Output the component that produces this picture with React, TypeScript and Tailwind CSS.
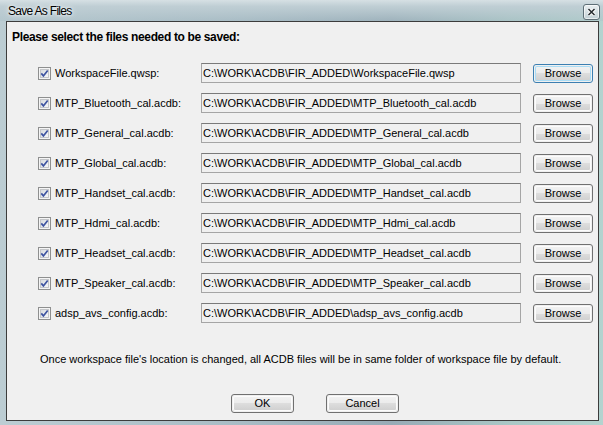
import React from "react";

const files = [
  "WorkspaceFile.qwsp",
  "MTP_Bluetooth_cal.acdb",
  "MTP_General_cal.acdb",
  "MTP_Global_cal.acdb",
  "MTP_Handset_cal.acdb",
  "MTP_Hdmi_cal.acdb",
  "MTP_Headset_cal.acdb",
  "MTP_Speaker_cal.acdb",
  "adsp_avs_config.acdb",
];

const basePath = "C:\\WORK\\ACDB\\FIR_ADDED\\";

/** Win7 style checked checkbox, 13x13 */
function CheckBox() {
  return (
    <svg width="13" height="13" viewBox="0 0 13 13" className="shrink-0">
      <defs>
        <linearGradient id="cbFill" x1="0" y1="0" x2="1" y2="1">
          <stop offset="0" stopColor="#d6d9dd" />
          <stop offset="1" stopColor="#f8f9fa" />
        </linearGradient>
      </defs>
      <rect x="0.5" y="0.5" width="12" height="12" fill="#f4f4f4" stroke="#8e8f8f" />
      <rect x="2.5" y="2.5" width="8" height="8" fill="url(#cbFill)" stroke="#c4c6c9" />
      <path d="M3.3 6.4 L5.4 8.9 L9.7 3.4" fill="none" stroke="#3d53a0" strokeWidth="1.7" />
    </svg>
  );
}

function WinButton({
  label,
  width,
  focused,
}: {
  label: string;
  width: string;
  focused?: boolean;
}) {
  return (
    <div
      className={`${width} h-[19px] shrink-0 rounded-[3px] border ${
        focused ? "border-[#3c7fb1]" : "border-[#707070]"
      } p-px`}
    >
      <div
        className={`flex h-full items-center justify-center rounded-[2px] bg-[linear-gradient(#f2f2f2_0%,#ebebeb_50%,#dddddd_50%,#cfcfcf_100%)] ${
          focused ? "shadow-[inset_0_0_0_1px_#a9dcf5]" : "shadow-[inset_0_0_0_1px_#fcfcfc]"
        } text-[11px] leading-none text-black`}
      >
        {label}
      </div>
    </div>
  );
}

function FileRow({ name, first }: { name: string; first: boolean }) {
  return (
    <div className="flex h-[30px] items-center pl-[31px]">
      <CheckBox />
      <div className="ml-[4px] w-[146px] text-[11px] text-black">{name}:</div>
      <div className="flex h-[20px] w-[320px] shrink-0 items-center border border-[#a5a5a5] border-t-[#7a7a7a] bg-[#f0f0f0] pl-[1px] text-[11px] text-black">
        {basePath + name}
      </div>
      <div className="ml-[12px]">
        <WinButton label="Browse" width="w-[60px]" focused={first} />
      </div>
    </div>
  );
}

export default function App() {
  return (
    <div
      className="relative flex h-[425px] w-[603px] flex-col overflow-hidden bg-[linear-gradient(90deg,#bccdd3_0%,#a8bcc5_40%,#97abb6_65%,#aac8c6_85%,#b4d3cf_100%)]"
      style={{ fontFamily: '"Liberation Sans", Arial, sans-serif' }}
    >
      {/* title bar */}
      <div className="flex h-[21px] shrink-0 items-center justify-between bg-[linear-gradient(#d6e0e4_0%,#bfced4_30%,rgba(170,190,198,0.4)_100%)] pl-[8px] pr-[3px]">
        <span className="text-[12px] tracking-[-0.7px] text-black [text-shadow:0_0_6px_#fff,0_0_3px_#fff]">
          Save As Files
        </span>
        <div className="mt-[2px] flex h-[16px] w-[17px] items-center justify-center rounded-[3px] border border-[#5d6e76] bg-[linear-gradient(#e9eff1,#c3d1d6)] shadow-[inset_0_0_0_1px_rgba(255,255,255,0.6)]">
          <svg width="9" height="8" viewBox="0 0 9 8">
            <path d="M1.5 1 L7.5 7 M7.5 1 L1.5 7" stroke="#fff" strokeWidth="3.4" />
            <path d="M1.5 1 L7.5 7 M7.5 1 L1.5 7" stroke="#2a2f33" strokeWidth="1.6" />
          </svg>
        </div>
      </div>

      {/* client area */}
      <div className="ml-[6px] mr-[4px] flex h-[400px] flex-col border border-[#3c3c3c] bg-[#f0f0f0]">
        <div className="pl-[5px] pt-[9px] text-[12px] font-bold leading-[13px] tracking-[-0.35px] text-black">
          Please select the files needed to be saved:
        </div>

        <div className="mt-[14px] flex flex-col">
          {files.map((f, i) => (
            <FileRow key={f} name={f} first={i === 0} />
          ))}
        </div>

        <div className="mt-[25px] pl-[33px] text-[11px] leading-[13px] text-black">
          Once workspace file's location is changed, all ACDB files will be in same folder of workspace file by default.
        </div>

        <div className="mt-[28px] flex pl-[224px]">
          <WinButton label="OK" width="w-[63px]" />
          <div className="ml-[32px]">
            <WinButton label="Cancel" width="w-[73px]" />
          </div>
        </div>
      </div>
    </div>
  );
}
